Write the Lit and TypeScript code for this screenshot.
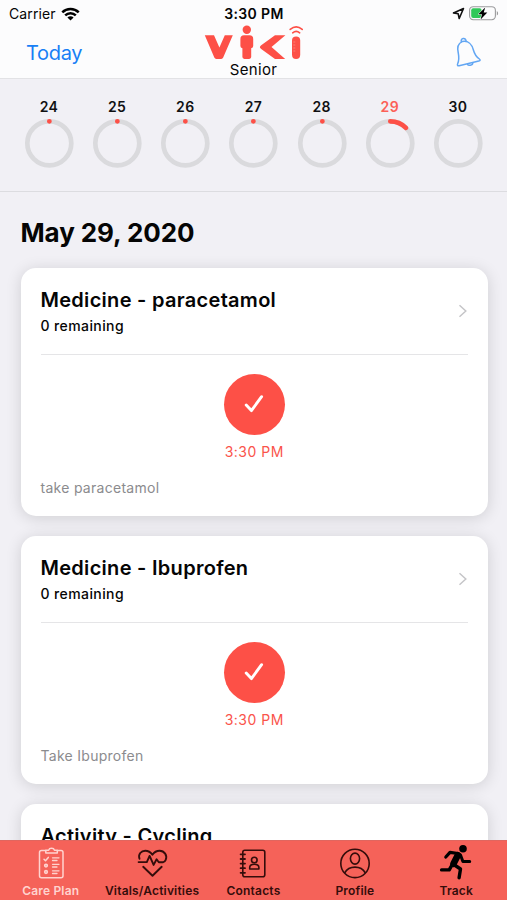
import { LitElement, html, svg, css, nothing } from "lit";
import { customElement, property } from "lit/decorators.js";

interface Day { label: string; progress: number; selected?: boolean; }
interface Task { title: string; remaining: string; time: string; note: string; }

const DAYS: Day[] = [
  { label: "24", progress: 0.001 },
  { label: "25", progress: 0.001 },
  { label: "26", progress: 0.001 },
  { label: "27", progress: 0.001 },
  { label: "28", progress: 0.001 },
  { label: "29", progress: 0.125, selected: true },
  { label: "30", progress: 0 },
];

const TASKS: Task[] = [
  { title: "Medicine - paracetamol", remaining: "0 remaining", time: "3:30 PM", note: "take paracetamol" },
  { title: "Medicine - Ibuprofen", remaining: "0 remaining", time: "3:30 PM", note: "Take Ibuprofen" },
  { title: "Activity - Cycling", remaining: "", time: "", note: "" },
];

const TABS = [
  {
    label: "Care Plan", active: true,
    icon: svg`<g fill="none" stroke="currentColor" stroke-width="1.5" stroke-linecap="round" stroke-linejoin="round">
      <path d="M14.500 6.500H10.500a2 2 0 0 0-2 2v23.200a2 2 0 0 0 2 2h19.500a2 2 0 0 0 2-2V8.500a2 2 0 0 0-2-2H26.500"/>
      <path d="M14.800 8.900h11.500V6.200h-2.900a2.900 2.300 0 0 0-5.700 0h-2.900z"/>
      <path d="M13 15.200l1.500 1.600 2.800-3.400"/>
      <path d="M21.500 13.800h6.500M21.500 16.500h4.500M21.500 20.300h6.500M21.500 23h4.500M21.500 26.800h6.500M21.500 29.500h4.500" stroke-width="1.300"/>
      <circle cx="15" cy="21.600" r="1.400" fill="currentColor" fill-opacity=".5"/><circle cx="15" cy="28" r="1.400" fill="currentColor" fill-opacity=".5"/></g>`,
  },
  {
    label: "Vitals/Activities",
    icon: svg`<g fill="none" stroke="currentColor" stroke-width="1.9" stroke-linecap="round" stroke-linejoin="round">
      <path d="M7.500 14.800C5.900 10.200 9.200 6.700 13.200 6.700c3.200 0 5.500 1.500 7.200 4 1.700-2.500 4-4 7.200-4 4.800 0 8 4.800 6.100 9.200-.6 1.400-1.500 2.300-2.600 2.300h-4.300l-2.200-2.900-3 5.600-4-9-2.800 6.200H6.600"/>
      <path d="M11.200 22.800L20.500 31.800l9.200-9"/></g>`,
  },
  {
    label: "Contacts",
    icon: svg`<g fill="none" stroke="currentColor" stroke-width="1.6" stroke-linecap="round" stroke-linejoin="round">
      <rect x="9.800" y="6.300" width="22" height="26.500" rx="2"/>
      <path d="M7.600 10.300h4.400M7.600 15h4.400M7.600 19.600h4.400M7.600 24.200h4.400M7.600 28.800h4.400" stroke-width="1.800"/>
      <circle cx="21.300" cy="16" r="2.800"/>
      <path d="M16.700 25v-1.400c0-2.400 1.600-3.400 4.600-3.400s4.600 1 4.600 3.400V25z"/></g>`,
  },
  {
    label: "Profile",
    icon: svg`<g fill="none" stroke="currentColor" stroke-width="1.6">
      <circle cx="20" cy="19.400" r="14.200"/>
      <ellipse cx="20" cy="14.600" rx="4.600" ry="5.500"/>
      <path d="M9.600 29c2.400-4.200 6-5.900 10.400-5.900s8 1.700 10.400 5.900"/></g>`,
  },
  {
    label: "Track", solid: true,
    icon: svg`<circle cx="27" cy="4.800" r="3.800" fill="currentColor"/>
      <g fill="none" stroke="currentColor" stroke-linecap="round" stroke-linejoin="round">
      <path d="M9.800 13L14 8.400 22 9.500" stroke-width="3.200"/>
      <path d="M21.800 11.200l-4.300 8.500" stroke-width="6.600"/>
      <path d="M24.500 11l2.400 6.600h6.800" stroke-width="3"/>
      <path d="M18.500 21l6 4-1.400 8.700" stroke-width="3.400"/>
      <path d="M16 21l-2.800 4.900H5.600" stroke-width="3.400"/></g>`,
  },
];

@customElement("status-bar")
class StatusBar extends LitElement {
  static styles = css`
    :host { display: grid; grid-template-columns: 1fr auto 1fr; align-items: center; height: 27px; padding: 0 8px 0 9px; font-size: 14px; }
    .carrier { display: flex; align-items: center; gap: 5.500px; letter-spacing: .1px; }
    .time { font-weight: 600; letter-spacing: .38px; }
    .right { display: flex; align-items: center; justify-content: flex-end; gap: 4px; }
    svg { display: block; }
  `;
  render() {
    return html`
      <div class="carrier"><span>Carrier</span>
        <svg width="19" height="14" viewBox="0 0 19 14"><g fill="none" stroke="#000" stroke-width="2.5">
          <path d="M1.3 5.3a11.6 11.6 0 0 1 16.4 0"/><path d="M4.2 8.4a7.5 7.5 0 0 1 10.6 0"/></g>
          <path d="M6.4 10.5a4.4 4.4 0 0 1 6.2 0l-3.1 3.1z"/></svg>
      </div>
      <div class="time">3:30 PM</div>
      <div class="right">
        <svg width="13" height="13" viewBox="0 0 13 13"><path d="M1.5 5.9L11.5 1.5 7.2 11.5 6.2 6.8z" fill="none" stroke="#111" stroke-width="1.6" stroke-linejoin="round"/></svg>
        <svg width="30" height="15" viewBox="0 0 30 15">
          <rect x=".6" y=".7" width="25.8" height="13" rx="3.6" fill="none" stroke="#9b9b9d" stroke-width="1.1"/>
          <path d="M27.800 5v4.600c1.800-.8 1.800-3.800 0-4.600z" fill="#9b9b9d"/>
          <rect x="2.2" y="2.3" width="10.4" height="9.8" rx="2" fill="#31c859"/>
          <path d="M16.2 1.5L9.3 8.2h3.700l-1.400 5.200 6.700-7h-3.600z" fill="#000" stroke="#fcfcfd" stroke-width="1" paint-order="stroke"/></svg>
      </div>`;
  }
}

@customElement("nav-header")
class NavHeader extends LitElement {
  static styles = css`
    :host { display: grid; grid-template-columns: 1fr auto 1fr; height: 52px; }
    .today { color: #187ff5; font-size: 20px; line-height: 24px; padding: 13.500px 0 0 26px; letter-spacing: -.3px; }
    .brand { display: flex; flex-direction: column; align-items: center; }
    .brand svg { display: block; margin-top: -3px; }
    .role { font-size: 15px; line-height: 18px; margin-top: 1px; letter-spacing: .3px; }
    .bell { justify-self: end; padding: 9px 25px 0 0; }
  `;
  render() {
    return html`
      <div class="today">Today</div>
      <div class="brand">
        <svg width="100" height="36" viewBox="0 0 100 36" fill="#fd5047">
          <path d="M.8 11.300h9.200l5.400 12.200 5.400-12.200h8l-9.600 22.200q-.6 1.400-2 1.400h-4.900q-1.400 0-2-1.400z"/>
          <circle cx="42.800" cy="5.700" r="4.200"/>
          <path d="M40 11.300h5.600q3.600 0 3.600 3.600v7.200q0 2.100-2 2.100v8.900q0 1.800-2 1.800h-4.800q-2 0-2-1.800v-8.900q-2 0-2-2.100v-7.200q0-3.600 3.600-3.600z"/>
          <path d="M71 11.300h10.400L67.500 23.100l13.700 11.800H71L57.200 25q-2.600-1.900 0-3.800z"/>
          <path d="M88 16.400q0-4 4.100-4t4.100 4v14.300q0 4.200-4.100 4.200t-4.100-4.200z"/>
          <g fill="none" stroke="#fd5047" stroke-width="1.6" stroke-linecap="round">
            <path d="M86.200 5.400q6-5.200 12 0"/><path d="M88.700 8.800q3.500-3 7 0"/></g>
          <path d="M89.300 18h2M89.300 21h2M89.300 24h2M89.300 27h2" stroke="#fe8b84" stroke-width=".8"/>
        </svg>
        <div class="role">Senior</div>
      </div>
      <div class="bell">
        <svg width="28" height="34" viewBox="0 0 28 34" fill="none" stroke="#62a6f3" stroke-width="1.5" stroke-linejoin="round" stroke-linecap="round">
          <path d="M8.200 5.600C3.600 7.600 3 12 4.300 17.200c.8 4.200.6 8-.7 10.800-.5 1.400.1 2 1.500 1.700l19.700-4.600c1.500-.4 1.700-1.300.6-2.100-3-2-4.900-5-6-9C18 8.600 14.200 4.300 8.200 5.600z"/>
          <path d="M7.300 5.600c-.8-3.600 4-4.500 4.800-.8M13.500 28.200c.6 1.700 5.300 1.200 5.300-1.200"/></svg>
      </div>`;
  }
}

@customElement("day-ring")
class DayRing extends LitElement {
  @property({ attribute: false }) day!: Day;
  static styles = css`
    :host { display: flex; flex-direction: column; align-items: center; width: 50px; }
    .label { font-size: 14px; line-height: 18px; font-weight: 600; letter-spacing: .4px; color: #101012; margin-bottom: 2px; }
    .selected { color: #fc6058; }
    svg { display: block; }
  `;
  render() {
    const length = 2 * Math.PI * 22;
    const { label, progress, selected } = this.day;
    return html`
      <div class="label ${selected ? "selected" : ""}">${label}</div>
      <svg width="50" height="50" viewBox="0 0 50 50" fill="none" stroke-width="4.7">
        <circle cx="25.300" cy="25.300" r="22" stroke="#dadadd"/>
        ${progress > 0
          ? svg`<circle cx="25.300" cy="25.300" r="22" stroke="#fd5047" stroke-linecap="round" transform="rotate(-90 25.300 25.300)" stroke-dasharray="${length * progress} ${length}"/>`
          : nothing}
      </svg>`;
  }
}

@customElement("task-card")
class TaskCard extends LitElement {
  @property({ attribute: false }) task!: Task;
  static styles = css`
    :host { display: block; box-sizing: border-box; height: 248.500px; padding: 20px 19.500px 0 20px; background: #fff; border-radius: 15px; box-shadow: 0 2px 16px rgba(0,0,0,.14); }
    .head { display: flex; align-items: center; justify-content: space-between; height: 66px; border-bottom: 1px solid #e5e5e7; }
    .titles { align-self: flex-start; }
    .title { font-size: 20px; font-weight: 600; line-height: 25px; white-space: nowrap; letter-spacing: .29px; }
    .remaining { font-size: 14px; font-weight: 500; line-height: 18px; margin-top: 4px; letter-spacing: .4px; }
    .head svg { display: block; margin-bottom: 20px; }
    .event { display: flex; flex-direction: column; align-items: center; padding-top: 19px; }
    .check { display: flex; align-items: center; justify-content: center; width: 61.500px; height: 61.500px; border-radius: 50%; background: #fd5047; }
    .time { margin-top: 8px; color: #fa544b; font-size: 14px; line-height: 18px; letter-spacing: .5px; }
    .note { margin-top: 17.500px; color: #8b8b8e; font-size: 14px; line-height: 18px; letter-spacing: .28px; }
  `;
  render() {
    const t = this.task;
    return html`
      <div class="head">
        <div class="titles"><div class="title">${t.title}</div>${t.remaining ? html`<div class="remaining">${t.remaining}</div>` : nothing}</div>
        <svg width="10" height="14" viewBox="0 0 10 14"><path d="M1.500 1.300L7.800 7 1.500 12.700" fill="none" stroke="#c5c5c8" stroke-width="1.500"/></svg>
      </div>
      ${t.time ? html`<div class="event">
        <div class="check"><svg width="22" height="22" viewBox="0 0 22 22"><path d="M3.200 12l5.200 5.600L18.600 3.700" fill="none" stroke="#fff" stroke-width="2.900" stroke-linecap="round" stroke-linejoin="round"/></svg></div>
        <div class="time">${t.time}</div>
      </div>
      <div class="note">${t.note}</div>` : nothing}`;
  }
}

@customElement("tab-bar")
class TabBar extends LitElement {
  static styles = css`
    :host { display: grid; grid-template-columns: repeat(5, 1fr); height: 60px; background: #f56259; box-shadow: inset 0 1px 0 #e0665f; }
    .tab { display: flex; flex-direction: column; align-items: center; color: #350d0b; padding-top: 3.500px; }
    .tab svg { display: block; overflow: visible; }
    .label { font-size: 12px; line-height: 15px; font-weight: 600; letter-spacing: .18px; white-space: nowrap; margin-top: 1.500px; }
    .active { color: #ffd3cf; }
    .solid svg { color: #000; }
  `;
  render() {
    return html`${TABS.map((t) => html`
      <div class="tab ${t.active ? "active" : ""} ${t.solid ? "solid" : ""}">
        <svg width="40" height="38" viewBox="0 0 40 38">${t.icon}</svg>
        <div class="label">${t.label}</div>
      </div>`)}`;
  }
}

@customElement("app-root")
class AppRoot extends LitElement {
  static styles = css`
    :host { display: flex; flex-direction: column; height: 900px; overflow: hidden; background: #f1f0f5; color: #050505; font-family: Inter, "Liberation Sans", sans-serif; }
    .top { flex: none; background: #fcfcfd; border-bottom: 1px solid #e2e2e5; height: 78px; }
    .week { flex: none; display: flex; justify-content: space-between; box-sizing: border-box; height: 113px; padding: 19px 24px 0; border-bottom: 1px solid #dcdce0; }
    .content { flex: 1; min-height: 0; overflow: hidden; padding: 0 19.500px 0 20.500px; }
    .date { margin: 25px 0 18.500px; font-size: 26px; line-height: 32px; font-weight: 700; letter-spacing: -.1px; }
    .cards { display: flex; flex-direction: column; gap: 19.500px; }
    tab-bar { flex: none; position: relative; }
  `;
  render() {
    return html`
      <div class="top"><status-bar></status-bar><nav-header></nav-header></div>
      <div class="week">${DAYS.map((d) => html`<day-ring .day=${d}></day-ring>`)}</div>
      <div class="content">
        <div class="date">May 29, 2020</div>
        <div class="cards">${TASKS.map((t) => html`<task-card .task=${t}></task-card>`)}</div>
      </div>
      <tab-bar></tab-bar>`;
  }
}
